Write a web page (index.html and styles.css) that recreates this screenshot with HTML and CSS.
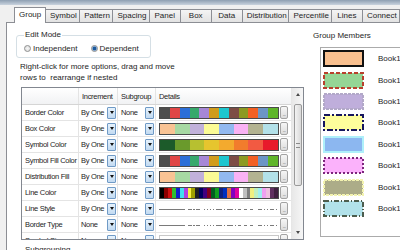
FILE: index.html
```html
<!DOCTYPE html>
<html lang="en">
<head>
<meta charset="UTF-8" />
<meta name="viewport" content="width=device-width, initial-scale=1.0" />
<title>Group Settings</title>
<link rel="stylesheet" href="styles.css">
</head>
<body>
<div class="titlebar"></div>
<div class="tabs">
<div class="tab active">Group</div>
<div class="tab">Symbol</div>
<div class="tab">Pattern</div>
<div class="tab">Spacing</div>
<div class="tab">Panel</div>
<div class="tab">Box</div>
<div class="tab">Data</div>
<div class="tab">Distribution</div>
<div class="tab">Percentile</div>
<div class="tab">Lines</div>
<div class="tab">Connect</div>
</div>

<div class="page">
<div class="left">
<fieldset class="edit-mode">
<legend>Edit Mode</legend>
<div class="modes">
<label class="radio"><span class="dot"></span>Independent</label>
<label class="radio on"><span class="dot"></span>Dependent</label>
</div>
</fieldset>

<p class="hint">Right-click for more options, drag and move<br>rows to&nbsp; rearrange if nested</p>

<div class="grid">
<div class="table">
<div class="row head"><div class="c c0"></div><div class="c c1">Increment</div><div class="c c2">Subgroup</div><div class="c c3">Details</div></div>
<div class="row"><div class="c c0">Border Color</div><div class="c c1">By One<span class="dd"></span></div><div class="c c2">None<span class="dd"></span></div><div class="c c3"><span class="bar dark"></span><span class="more">...</span></div></div>
<div class="row"><div class="c c0">Box Color</div><div class="c c1">By One<span class="dd"></span></div><div class="c c2">None<span class="dd"></span></div><div class="c c3"><span class="bar pastel"></span><span class="more">...</span></div></div>
<div class="row"><div class="c c0">Symbol Color</div><div class="c c1">By One<span class="dd"></span></div><div class="c c2">None<span class="dd"></span></div><div class="c c3"><span class="bar warm"></span><span class="more">...</span></div></div>
<div class="row"><div class="c c0">Symbol Fill Color</div><div class="c c1">By One<span class="dd"></span></div><div class="c c2">None<span class="dd"></span></div><div class="c c3"><span class="bar dark"></span><span class="more">...</span></div></div>
<div class="row"><div class="c c0">Distribution Fill</div><div class="c c1">By One<span class="dd"></span></div><div class="c c2">None<span class="dd"></span></div><div class="c c3"><span class="bar pastel"></span><span class="more">...</span></div></div>
<div class="row"><div class="c c0">Line Color</div><div class="c c1">By One<span class="dd"></span></div><div class="c c2">None<span class="dd"></span></div><div class="c c3"><span class="bar rainbow"></span><span class="more">...</span></div></div>
<div class="row"><div class="c c0">Line Style</div><div class="c c1">By One<span class="dd"></span></div><div class="c c2">None<span class="dd"></span></div><div class="c c3">
<svg class="lines" width="120" height="12">
<line x1="0" y1="6.5" x2="26" y2="6.5"/>
<line x1="29" y1="6.5" x2="42" y2="6.5" stroke-dasharray="4 1 2 1"/>
<line x1="45" y1="6.5" x2="55" y2="6.5" stroke-dasharray="1 2"/>
<line x1="57" y1="6.5" x2="77" y2="6.5" stroke-dasharray="6 2 1 2"/>
<line x1="79" y1="6.5" x2="97" y2="6.5" stroke-dasharray="3 3"/>
<line x1="99" y1="6.5" x2="120" y2="6.5" stroke-dasharray="4 2 1 2 1 2"/>
</svg><span class="more">...</span></div></div>
<div class="row"><div class="c c0">Border Type</div><div class="c c1">None<span class="dd"></span></div><div class="c c2">None<span class="dd"></span></div><div class="c c3">
<svg class="lines" width="120" height="12">
<line x1="0" y1="6.5" x2="26" y2="6.5"/>
<line x1="29" y1="6.5" x2="42" y2="6.5" stroke-dasharray="4 1 2 1"/>
<line x1="45" y1="6.5" x2="55" y2="6.5" stroke-dasharray="1 2"/>
<line x1="57" y1="6.5" x2="77" y2="6.5" stroke-dasharray="6 2 1 2"/>
<line x1="79" y1="6.5" x2="97" y2="6.5" stroke-dasharray="3 3"/>
<line x1="99" y1="6.5" x2="120" y2="6.5" stroke-dasharray="4 2 1 2 1 2"/>
</svg><span class="more">...</span></div></div>
<div class="row"><div class="c c0">Symbol Size</div><div class="c c1">None<span class="dd"></span></div><div class="c c2">None<span class="dd"></span></div><div class="c c3"><span class="bar blank"></span><span class="more">...</span></div></div>
</div>
<div class="vscroll"><span class="arrow up"></span><span class="thumb"></span><span class="arrow down"></span></div>
</div>

<fieldset class="sub"><legend>Subgrouping</legend></fieldset>
</div>

<div class="right">
<div class="members-title">Group Members</div>
<div class="members">
<div class="member"><svg class="sw s1" width="41" height="17"><rect x="1" y="1" width="39" height="15"/></svg>Book1</div>
<div class="member"><svg class="sw s2" width="41" height="17"><rect x="1" y="1" width="39" height="15"/></svg>Book1</div>
<div class="member"><svg class="sw s3" width="41" height="17"><rect x="1" y="1" width="39" height="15"/></svg>Book1</div>
<div class="member"><svg class="sw s4" width="41" height="17"><rect x="1" y="1" width="39" height="15"/></svg>Book1</div>
<div class="member"><svg class="sw s5" width="41" height="17"><rect x="1" y="1" width="39" height="15"/></svg>Book1</div>
<div class="member"><svg class="sw s6" width="41" height="17"><rect x="1" y="1" width="39" height="15"/></svg>Book1</div>
<div class="member"><svg class="sw s7" width="41" height="17"><rect x="1" y="1" width="39" height="15"/></svg>Book1</div>
<div class="member"><svg class="sw s8" width="41" height="17"><rect x="1" y="1" width="39" height="15"/></svg>Book1</div>
</div>
</div>
</div>
</body>
</html>
```

FILE: styles.css
```css
body {
margin: 0;
width: 400px;
height: 250px;
overflow: hidden;
background: #f0f0f0;
font-family: "Liberation Sans", Arial, sans-serif;
font-size: 8px;
color: #1e1e1e;
}

.titlebar {
height: 5px;
background: linear-gradient(#8e9fb2, #c9d3de);
}

.tabs {
display: flex;
align-items: flex-end;
height: 17px;
padding-left: 15px;
}

.tab {
height: 12px;
line-height: 12px;
padding: 0 4px;
min-width: 22px;
text-align: center;
border: 1px solid #8c8e94;
border-bottom: 0;
margin-left: -1px;
background: linear-gradient(#f4f4f4, #e2e2e2);
white-space: nowrap;
}

.tab.active {
height: 15px;
line-height: 13px;
background: #fff;
margin-bottom: -1px;
position: relative;
z-index: 1;
}

.page {
display: flex;
height: 228px;
margin-left: 6px;
border: 1px solid #8c8e94;
border-right: 0;
border-bottom: 0;
background: #fff;
overflow: hidden;
}

.left {
width: 283px;
padding-left: 14px;
flex-shrink: 0;
}

fieldset {
margin: 0;
border: 1px solid #d5dfe5;
border-radius: 3px;
}

legend {
padding: 0 1px;
line-height: 10px;
}

.edit-mode {
margin: 7px 0 0 -5px;
padding: 3px 0 4px 7px;
width: 126px;
}

.modes {
display: flex;
gap: 13px;
}

.radio {
display: flex;
align-items: center;
height: 10px;
}

.dot {
width: 5px;
height: 5px;
margin-right: 2px;
border: 1px solid #8e8f8f;
border-radius: 50%;
background: radial-gradient(circle, #f6f6f6, #d8d8d8);
}

.radio.on .dot {
background: radial-gradient(circle, #1d5a9c 0 1.5px, #76a2d2 2px, #e6eef6 3px);
}

.hint {
margin: 3px 0 0 -1px;
line-height: 11px;
}

.grid {
display: flex;
margin-top: 4px;
width: 283px;
height: 153px;
box-sizing: border-box;
border: 1px solid #828790;
background: #fff;
}

.table {
width: 269px;
overflow: hidden;
}

.row {
display: flex;
height: 16px;
box-sizing: border-box;
border-bottom: 1px solid #e4e4e4;
}

.row.head {
height: 17px;
background: linear-gradient(#ffffff, #f1f2f4);
border-bottom: 1px solid #d5d5d5;
}

.c {
display: flex;
align-items: center;
box-sizing: border-box;
border-right: 1px solid #e4e4e4;
white-space: nowrap;
overflow: hidden;
font-size: 7.5px;
letter-spacing: -0.3px;
}

.c0 { width: 57px; padding-left: 3px; }
.c1 { width: 39px; padding: 0 1px 0 2px; justify-content: space-between; }
.c2 { width: 38px; padding: 0 1px 0 3px; justify-content: space-between; }
.c3 { width: 135px; padding-left: 3px; border-right: 0; }
.head .c1 { padding-left: 3px; }

.dd {
display: flex;
align-items: center;
justify-content: center;
width: 7px;
height: 10px;
border: 1px solid #6f9ac6;
border-radius: 1px;
background: linear-gradient(#e6f2fc, #c2daf1);
}

.dd::after {
content: "";
border-left: 2px solid transparent;
border-right: 2px solid transparent;
border-top: 3px solid #111;
}

.bar {
width: 120px;
height: 12px;
box-sizing: border-box;
border: 1px solid #4a4a4a;
}

.lines line {
stroke: #7a7a7a;
stroke-width: 1;
}

.more {
display: flex;
align-items: flex-end;
justify-content: center;
width: 8px;
height: 13px;
margin-left: 1px;
box-sizing: border-box;
border: 1px solid #a2a2a2;
border-radius: 2px;
background: linear-gradient(#f6f6f6, #dcdcdc);
font-size: 5px;
line-height: 7px;
letter-spacing: -0.5px;
color: #666;
}

.dark {
background: linear-gradient(90deg, #4d4d4d 8.33%, #e04646 0 16.67%, #2c6fd8 0 25%, #37a96c 0 33.33%, #a687d6 0 41.67%, #d09c1c 0 50%, #1ec6cf 0 58.33%, #7d4d45 0 66.67%, #8c9a22 0 75%, #f26024 0 83.33%, #6c95c5 0 91.67%, #5fb52a 0);
}

.pastel {
background: linear-gradient(90deg, #f9c394 12.5%, #a7d9a3 0 25%, #c1b1da 0 37.5%, #fbfb95 0 50%, #92b9f0 0 62.5%, #f9b2f4 0 75%, #b3b391 0 87.5%, #b3e1e9 0);
}

.warm {
background: linear-gradient(90deg, #1c5b2a 12.5%, #6a9a2c 0 25%, #b7c030 0 37.5%, #e6c52e 0 50%, #f3aa2e 0 62.5%, #f27c2c 0 75%, #f25a42 0 87.5%, #e8192b 0);
}

.rainbow {
background: linear-gradient(90deg, #000000 3.33%, #8b0000 0 6.67%, #d01010 0 10%, #30c030 0 13.33%, #1020d0 0 16.67%, #40e0f0 0 20%, #b040e0 0 23.33%, #f8f040 0 26.67%, #a0a000 0 30%, #202020 0 33.33%, #000060 0 36.67%, #400080 0 40%, #800020 0 43.33%, #006020 0 46.67%, #10a020 0 50%, #102080 0 53.33%, #0030c0 0 56.67%, #e07040 0 60%, #8000c0 0 63.33%, #e000a0 0 66.67%, #ffffff 0 70%, #c0c0c0 0 73.33%, #808080 0 76.67%, #f0f080 0 80%, #c0f0c0 0 83.33%, #a0f0f0 0 86.67%, #f0a0f0 0 90%, #f0c0e0 0 93.33%, #603060 0 96.67%, #402040 0);
}

.blank {
border-color: #c8c8c8;
}

.vscroll {
display: flex;
flex-direction: column;
align-items: center;
width: 12px;
box-sizing: border-box;
border-left: 1px solid #e6e6e6;
background: linear-gradient(90deg, #e8e8e8, #f6f6f6);
}

.arrow {
display: flex;
align-items: center;
justify-content: center;
height: 13px;
}

.arrow::after {
content: "";
border-left: 2px solid transparent;
border-right: 2px solid transparent;
}

.up::after { border-bottom: 3px solid #4a4a4a; }
.down::after { border-top: 3px solid #4a4a4a; }

.down {
margin-top: auto;
}

.thumb {
display: flex;
align-items: center;
justify-content: center;
width: 8px;
height: 82px;
margin-top: 3px;
box-sizing: border-box;
border: 1px solid #9a9a9a;
border-radius: 2px;
background: linear-gradient(90deg, #f3f3f3, #d9d9d9);
}

.thumb::after {
content: "";
width: 4px;
height: 3px;
border-top: 1px solid #8a8a8a;
border-bottom: 1px solid #8a8a8a;
}

.sub {
margin: 5px 0 0 -5px;
padding: 0 0 0 7px;
width: 270px;
height: 20px;
}

.right {
margin-left: 9px;
}

.members-title {
margin-top: 8px;
line-height: 10px;
white-space: nowrap;
}

.members {
width: 100px;
height: 190px;
margin: 6px 0 0 7px;
padding-left: 2px;
box-sizing: border-box;
border: 1px solid #ababab;
border-right: 0;
}

.member {
display: flex;
align-items: center;
height: 21.4px;
}

.sw {
margin-right: 14px;
flex-shrink: 0;
}

.sw rect { stroke-width: 2; }
.s1 rect { fill: #f9c08f; stroke: #111; }
.s2 rect { fill: #95d595; stroke: #b8402c; stroke-dasharray: 4 2; }
.s3 rect { fill: #bfaedb; stroke: #b2a8c8; stroke-dasharray: 3 1; }
.s4 rect { fill: #fefe9c; stroke: #16165e; stroke-dasharray: 6 2 2 2; }
.s5 rect { fill: #8cb7f0; stroke: #aef0fa; }
.s6 rect { fill: #fbb2fb; stroke: #7d257d; stroke-dasharray: 2 2; }
.s7 rect { fill: #acac88; stroke: #f3f3b0; stroke-dasharray: 3 1; }
.s8 rect { fill: #b2e2ea; stroke: #4d5d4d; stroke-dasharray: 5 2 1 2; }
```
